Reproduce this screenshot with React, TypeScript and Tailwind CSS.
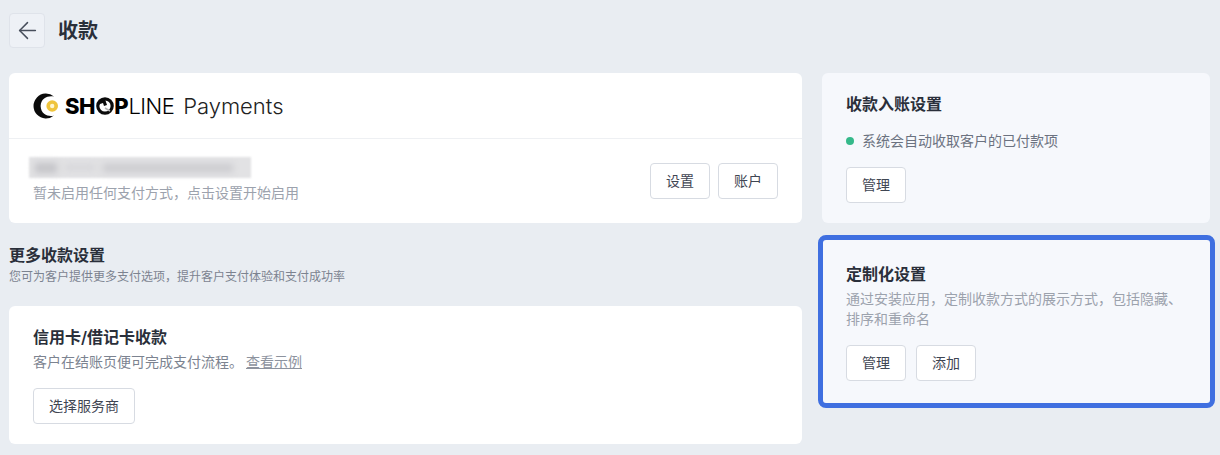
import { ArrowLeft } from 'lucide-react';

const font = 'font-["Inter","Noto_Sans_CJK_SC",sans-serif]';

function Btn({ label }: { label: string }) {
    return (
        <button className="h-[36px] px-[15px] rounded-[4px] border border-[#d7dbe2] bg-white text-[14px] text-[#3f4653] leading-none shrink-0">
            {label}
        </button>
    );
}

function Logo() {
    return (
        <div className="flex items-center h-[26px] text-black">
            <svg width="26" height="26" viewBox="0 0 26 26" className="shrink-0">
                <path d="M21 3.6A12.4 12.4 0 1 0 21 22.4C17 24 8 22.5 7.6 13C8 4.5 16 2.2 21 3.6Z" fill="#0b0b0b" />
                <circle cx="19.2" cy="13" r="6.6" fill="#fff" />
                <circle cx="19.2" cy="13" r="5.8" fill="#efc43c" />
                <circle cx="19.2" cy="13" r="2.2" fill="#fff6cf" />
            </svg>
            <span className="ml-[6px] text-[22px] font-extrabold tracking-[-0.4px] leading-none">SH</span>
            <svg width="18" height="18" viewBox="0 0 18 18" className="shrink-0 mx-[0.5px]">
                <circle cx="9" cy="9" r="7.2" fill="none" stroke="#0b0b0b" strokeWidth="3.2" />
                <path d="M2 9a7 7 0 0 1 7-7l2 6-3 1-1-3-3 1z" fill="#0b0b0b" />
                <path d="M9 11l5 3" stroke="#b5b5b5" strokeWidth="1.5" />
            </svg>
            <span className="text-[22px] font-extrabold leading-none">P</span>
            <span className="text-[22px] font-light tracking-[-0.6px] leading-none">LINE</span>
            <span className="ml-[9px] text-[22px] font-light text-[#222] leading-none">Payments</span>
        </div>
    );
}

export default function App() {
    return (
        <div className={`w-[1220px] h-[455px] overflow-hidden bg-[#e9edf2] pt-[13px] pl-[9px] ${font}`}>
            <div className="flex items-center h-[35px]">
                <div className="w-[36px] h-[35px] rounded-[4px] border border-[#dfe3ea] bg-[#eef1f6] flex items-center justify-center text-[#474e5b]">
                    <ArrowLeft size={27} strokeWidth={1.3} />
                </div>
                <h1 className="ml-[13px] text-[20px] font-semibold text-[#2a2f3a] leading-none">收款</h1>
            </div>

            <div className="flex mt-[25px] gap-[20px]">
                <div className="w-[793px] flex flex-col">
                    <div className="h-[150px] bg-white rounded-[6px]">
                        <div className="h-[66px] pl-[24px] flex items-center border-b border-[#eef0f3]">
                            <Logo />
                        </div>
                        <div className="flex items-center justify-between pl-[20px] pr-[24px] h-[84px]">
                            <div className="flex flex-col -mt-[2px]">
                                <div className="w-[222px] h-[21px] bg-[#e2e2e4] blur-[1px] flex items-center gap-[8px] px-[6px]">
                                    <div className="w-[22px] h-[10px] bg-[#c4c4c8] blur-[3px]" />
                                    <div className="w-[30px] h-[5px] bg-[#d4d4d8] blur-[3px]" />
                                    <div className="w-[130px] h-[8px] bg-[#cbcbcf] blur-[3px]" />
                                </div>
                                <p className="ml-[4px] mt-[5px] text-[14px] leading-[20px] text-[#9ca2ad]">暂未启用任何支付方式，点击设置开始启用</p>
                            </div>
                            <div className="flex gap-[8px]">
                                <Btn label="设置" />
                                <Btn label="账户" />
                            </div>
                        </div>
                    </div>

                    <h2 className="mt-[22px] text-[16px] font-semibold leading-[20px] text-[#2a2f3a]">更多收款设置</h2>
                    <p className="mt-[4px] text-[12px] leading-[16px] text-[#7c8390]">您可为客户提供更多支付选项，提升客户支付体验和支付成功率</p>

                    <div className="mt-[21px] h-[138px] bg-white rounded-[6px] px-[24px] pt-[20px]">
                        <h3 className="text-[16px] font-semibold leading-[22px] text-[#2a2f3a]">信用卡/借记卡收款</h3>
                        <p className="mt-[4px] text-[14px] leading-[20px] text-[#7c8390]">
                            客户在结账页便可完成支付流程。
                            <a className="ml-[3px] underline text-[#8d939e]">查看示例</a>
                        </p>
                        <div className="mt-[16px]">
                            <Btn label="选择服务商" />
                        </div>
                    </div>
                </div>

                <div className="w-[388px] flex flex-col">
                    <div className="h-[150px] rounded-[6px] bg-[#f6f8fc] px-[24px] pt-[20px]">
                        <h3 className="text-[16px] font-semibold leading-[22px] text-[#2a2f3a]">收款入账设置</h3>
                        <div className="flex items-center mt-[16px] h-[20px]">
                            <span className="w-[8px] h-[8px] rounded-full bg-[#35b98a]" />
                            <span className="ml-[8px] text-[14px] text-[#6b7280] leading-[20px]">系统会自动收取客户的已付款项</span>
                        </div>
                        <div className="mt-[16px]">
                            <Btn label="管理" />
                        </div>
                    </div>

                    <div className="-ml-[4px] mt-[12px] w-[397px] h-[173px] rounded-[8px] border-[5px] border-[#3f6fe0] bg-[#f6f8fc] pl-[23px] pt-[23px]">
                        <h3 className="text-[16px] font-semibold leading-[22px] text-[#2a2f3a]">定制化设置</h3>
                        <p className="mt-[4px] w-[345px] text-[14px] leading-[20px] text-[#9ca2ad]">通过安装应用，定制收款方式的展示方式，包括隐藏、排序和重命名</p>
                        <div className="mt-[16px] flex gap-[10px]">
                            <Btn label="管理" />
                            <Btn label="添加" />
                        </div>
                    </div>
                </div>
            </div>
        </div>
    );
}
